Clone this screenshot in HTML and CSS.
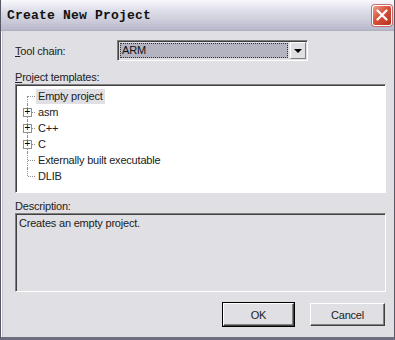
FILE: index.html
```html
<!DOCTYPE html>
<html lang="en">
<head>
    <meta charset="UTF-8">
    <title>Create New Project</title>
    <link rel="stylesheet" href="styles.css">
</head>
<body>
    <div class="window">
        <div class="titlebar">
            <span class="title">Create New Project</span>
            <span class="close">
                <svg width="12" height="12" viewBox="0 0 12 12">
                    <path d="M1.5 1.5 L10.5 10.5 M10.5 1.5 L1.5 10.5" stroke="#fff" stroke-width="2.2" stroke-linecap="round"/>
                </svg>
            </span>
        </div>

        <div class="content">
            <div class="field">
                <label class="field-label"><u>T</u>ool chain:</label>
                <div class="combo">
                    <span class="combo-value"><span class="focus">ARM</span></span>
                    <span class="combo-btn"><span class="arrow"></span></span>
                </div>
            </div>

            <div class="section-label"><u>P</u>roject templates:</div>
            <div class="tree">
                <div class="node first"><span class="gutter"></span><span class="text selected">Empty project</span></div>
                <div class="node"><span class="gutter"><span class="plus">+</span></span><span class="text">asm</span></div>
                <div class="node"><span class="gutter"><span class="plus">+</span></span><span class="text">C++</span></div>
                <div class="node"><span class="gutter"><span class="plus">+</span></span><span class="text">C</span></div>
                <div class="node"><span class="gutter"></span><span class="text">Externally built executable</span></div>
                <div class="node last"><span class="gutter"></span><span class="text">DLIB</span></div>
            </div>

            <div class="section-label desc-label">Description:</div>
            <div class="description">Creates an empty project.</div>

            <div class="buttons">
                <button class="btn default">OK</button>
                <button class="btn">Cancel</button>
            </div>
        </div>
    </div>
</body>
</html>
```

FILE: styles.css
```css
body {
    margin: 0;
    font-family: "Liberation Sans", Arial, sans-serif;
    font-size: 11px;
    letter-spacing: -0.2px;
    color: #222;
}
.window {
    width: 395px;
    height: 340px;
    box-sizing: border-box;
    background: #e0dfe3;
    border: 1px solid #585867;
    border-top: none;
    border-bottom: 3px solid #6e6e80;
    box-shadow: inset 1px 0 0 #fff, inset 2px 0 0 #c8c8d2;
}
.titlebar {
    height: 30px;
    display: flex;
    align-items: center;
    justify-content: space-between;
    padding: 0 2px 0 6px;
    background: linear-gradient(#f8f8fc 0%, #e2e2ec 30%, #c8c8d8 75%, #b8b8cc 100%);
    border-bottom: 1px solid #b0b0bc;
}
.title {
    font-family: "Liberation Mono", "Courier New", monospace;
    font-weight: bold;
    font-size: 13px;
    color: #111;
    letter-spacing: 0.2px;
}
.close {
    width: 20px;
    height: 21px;
    box-sizing: border-box;
    display: flex;
    align-items: center;
    justify-content: center;
    border: 1px solid #fff;
    border-radius: 3px;
    background: linear-gradient(135deg, #f0a090 0%, #d8503a 45%, #b83220 100%);
    box-shadow: 0 0 0 1px #c07070;
}
.content {
    padding: 9px 8px 0 14px;
}
.field {
    display: flex;
    align-items: center;
    height: 21px;
}
.field-label {
    width: 102px;
}
.combo {
    width: 191px;
    height: 21px;
    box-sizing: border-box;
    display: flex;
    border: 1px solid #fff;
    border-top-color: #808080;
    border-left-color: #808080;
    box-shadow: inset 1px 1px 0 #404040;
}
.combo-value {
    flex: 1;
    padding: 2px;
    display: flex;
}
.focus {
    flex: 1;
    background: #b4b4c0;
    outline: 1px dotted #333;
    outline-offset: -1px;
    padding: 1px 2px;
    color: #111;
}
.combo-btn {
    width: 16px;
    margin: 1px 1px 1px 0;
    box-sizing: border-box;
    display: flex;
    align-items: center;
    justify-content: center;
    background: #e0dfe3;
    border: 1px solid #808080;
    border-top-color: #fff;
    border-left-color: #fff;
}
.arrow {
    width: 0;
    height: 0;
    border-left: 4px solid transparent;
    border-right: 4px solid transparent;
    border-top: 4px solid #000;
}
.section-label {
    margin-top: 10px;
    height: 13px;
}
.tree {
    height: 109px;
    box-sizing: border-box;
    background: #fff;
    border: 1px solid #fff;
    border-top-color: #808080;
    border-left-color: #808080;
    box-shadow: inset 1px 1px 0 #404040;
    padding: 3px 2px 0 2px;
}
.node {
    display: flex;
    height: 16px;
    align-items: center;
}
.gutter {
    position: relative;
    width: 18px;
    height: 16px;
    flex: none;
}
.gutter::before {
    content: "";
    position: absolute;
    left: 9px;
    top: 0;
    bottom: 0;
    border-left: 1px dotted #909090;
}
.first .gutter::before {
    top: 8px;
}
.last .gutter::before {
    bottom: 8px;
}
.gutter::after {
    content: "";
    position: absolute;
    left: 10px;
    width: 7px;
    top: 8px;
    border-top: 1px dotted #909090;
}
.plus {
    position: absolute;
    left: 5px;
    top: 4px;
    width: 9px;
    height: 9px;
    box-sizing: border-box;
    border: 1px solid #909090;
    background: #fff;
    z-index: 1;
    font-size: 10px;
    line-height: 6px;
    text-align: center;
    letter-spacing: 0;
    color: #000;
}
.text {
    padding: 1px 2px;
    line-height: 13px;
}
.selected {
    background: #e0dfe3;
}
.desc-label {
    margin-top: 7px;
}
.description {
    height: 79px;
    box-sizing: border-box;
    border: 1px solid #fff;
    border-top-color: #808080;
    border-left-color: #808080;
    box-shadow: inset 1px 1px 0 #404040;
    padding: 3px 3px;
}
.buttons {
    display: flex;
    justify-content: flex-end;
    gap: 16px;
    margin-top: 11px;
    padding-right: 1px;
}
.btn {
    height: 23px;
    width: 75px;
    box-sizing: border-box;
    font-family: "Liberation Sans", Arial, sans-serif;
    font-size: 11px;
    letter-spacing: -0.2px;
    color: #222;
    background: #e0dfe3;
    border: 1px solid #404040;
    border-top-color: #fff;
    border-left-color: #fff;
    box-shadow: inset -1px -1px 0 #808080;
    padding: 0;
}
.btn.default {
    width: 71px;
    outline: 1px solid #000;
    box-shadow: inset -1px -1px 0 #808080, inset 1px 1px 0 #e0dfe3;
}
```
